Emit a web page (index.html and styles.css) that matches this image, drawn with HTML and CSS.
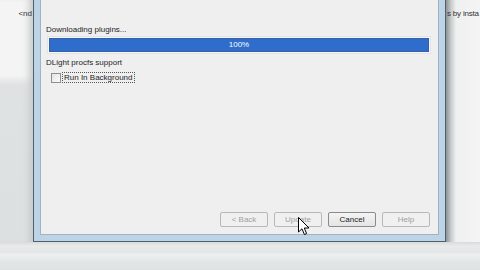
FILE: index.html
```html
<!DOCTYPE html>
<html lang="en">
<head>
  <meta charset="UTF-8">
  <title>Plugin Update</title>
  <link rel="stylesheet" href="styles.css">
</head>
<body>
  <div class="desk">
    <div class="side side-left">
      <div class="side-text">&lt;nd</div>
    </div>
    <div class="window">
      <div class="content">
        <div class="label label-top">Downloading plugins...</div>
        <div class="progress">
          <div class="progress-fill">100%</div>
        </div>
        <div class="label">DLight procfs support</div>
        <label class="check-row">
          <span class="checkbox"></span>
          <span class="check-text">Run In Background</span>
        </label>
        <div class="buttons">
          <div class="btn disabled">&lt; Back</div>
          <div class="btn disabled">Update</div>
          <div class="btn">Cancel</div>
          <div class="btn disabled">Help</div>
        </div>
      </div>
    </div>
    <div class="side side-right">
      <div class="side-text">s by insta</div>
    </div>
  </div>
  <div class="floor"></div>
  <svg class="cursor" width="12" height="19" viewBox="0 0 12 19">
    <path d="M0.5 0.5 L0.5 15 L4 11.8 L6.4 17.5 L8.6 16.6 L6.3 11 L11 11 Z" fill="#fff" stroke="#000" stroke-width="1"/>
  </svg>
</body>
</html>
```

FILE: styles.css
```css
body {
  margin: 0;
  width: 480px;
  height: 270px;
  overflow: hidden;
  background: #e4e7e7;
  font-family: "Liberation Sans", Arial, sans-serif;
  font-size: 8px;
  color: #1e1e1e;
  display: flex;
  flex-direction: column;
  position: relative;
}
.desk {
  display: flex;
  height: 242px;
}
.side {
  flex: none;
  min-width: 0;
  background: linear-gradient(#f4f4f4 0, #f4f4f4 75px, #dfe2e2 85px, #dde0e0 100%);
}
.side-left {
  width: 33px;
  display: flex;
  justify-content: flex-end;
  box-shadow: inset -8px 0 6px -4px #c9cccc;
}
.side-right {
  flex: 1;
  background: linear-gradient(90deg, #8e9294 0, #c8cbcc 5px, #eff0f0 10px, #f4f4f4 100%);
}
.side-text {
  padding-top: 9px;
  font-size: 8px;
  color: #333;
  white-space: nowrap;
}
.side-left .side-text {
  padding-right: 1px;
}
.side-right .side-text {
  padding-left: 1px;
  letter-spacing: -0.2px;
}
.window {
  flex: none;
  width: 413px;
  box-sizing: border-box;
  border: 1px solid #4e5f6e;
  border-top: none;
  background: #bdd3e6;
  padding: 0 6px 6px;
  display: flex;
}
.content {
  flex: 1;
  background: #efefef;
  border: 1px solid #9fb3c6;
  border-top: none;
  display: flex;
  flex-direction: column;
  padding: 0 7px 7px 5px;
}
.label {
  line-height: 10px;
  height: 10px;
  white-space: nowrap;
}
.label-top {
  margin-top: 25px;
}
.progress {
  margin: 1px 0 4px 1px;
  border: 1px solid #dfe4ec;
  padding: 1px;
  background: #f6f6f6;
}
.progress-fill {
  height: 12px;
  background: #2e6dcc;
  border: 1px solid #3a5f9e;
  color: #fff;
  text-align: center;
  line-height: 12px;
}
.check-row {
  display: flex;
  align-items: center;
  margin: 4px 0 0 5px;
  gap: 1px;
}
.checkbox {
  width: 8px;
  height: 8px;
  border: 1px solid #8f8f8f;
  background: linear-gradient(135deg, #e4e4e4, #fbfbfb);
}
.check-text {
  border: 1px dotted #555;
  padding: 0 1px;
  line-height: 9px;
}
.buttons {
  margin-top: auto;
  display: flex;
  justify-content: flex-end;
  gap: 6px;
  padding-right: 1px;
}
.btn {
  width: 48px;
  height: 15px;
  box-sizing: border-box;
  border: 1px solid #8a8a8a;
  border-radius: 2px;
  background: linear-gradient(#f4f4f4, #e4e4e4);
  text-align: center;
  line-height: 13px;
  color: #222;
}
.btn.disabled {
  border-color: #b8b8b8;
  color: #a0a0a0;
  background: #f0f0f0;
}
.floor {
  flex: 1;
  background: linear-gradient(#d8dbdb 0, #e9ebeb 4px, #e3e6e6 10px, #eef0f0 13px, #e2e5e5 20px, #dfe2e2 100%);
}
.cursor {
  position: absolute;
  left: 298px;
  top: 217px;
}
```
